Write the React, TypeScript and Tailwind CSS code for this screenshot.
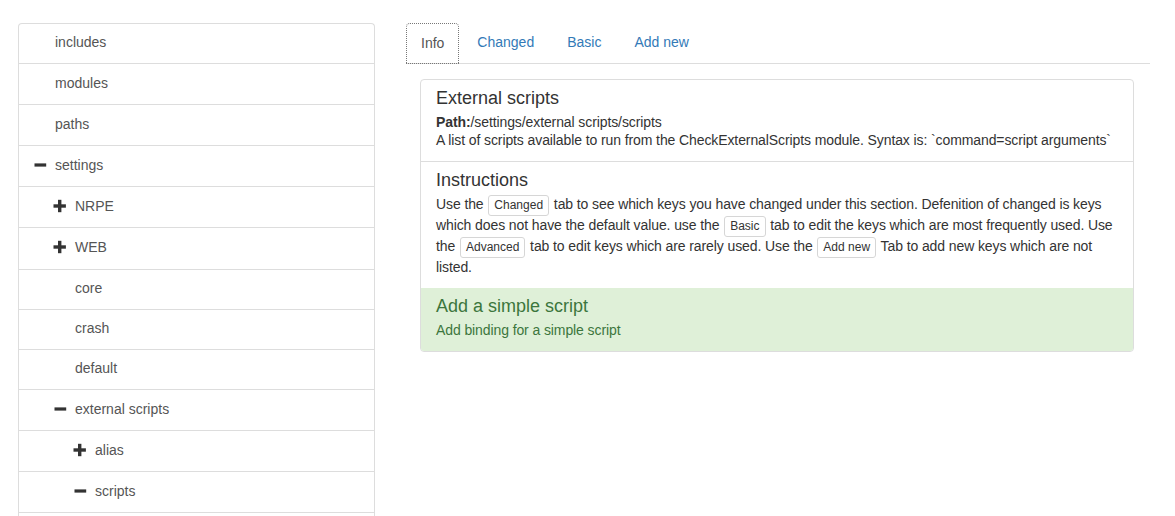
import React from "react";

type Node = {
  label: string;
  level: number;
  icon?: "plus" | "minus";
  h: string;
};

const nodes: Node[] = [
  { label: "includes", level: 0, h: "h-[40px]" },
  { label: "modules", level: 0, h: "h-[41px]" },
  { label: "paths", level: 0, h: "h-[41px]" },
  { label: "settings", level: 0, icon: "minus", h: "h-[41px]" },
  { label: "NRPE", level: 1, icon: "plus", h: "h-[41px]" },
  { label: "WEB", level: 1, icon: "plus", h: "h-[42px]" },
  { label: "core", level: 1, h: "h-[40px]" },
  { label: "crash", level: 1, h: "h-[40px]" },
  { label: "default", level: 1, h: "h-[40px]" },
  { label: "external scripts", level: 1, icon: "minus", h: "h-[41px]" },
  { label: "alias", level: 2, icon: "plus", h: "h-[41px]" },
  { label: "scripts", level: 2, icon: "minus", h: "h-[41px]" },
  { label: "", level: 2, h: "h-[41px]" },
];

const indent = ["pl-[14px]", "pl-[34px]", "pl-[54px]"];

function Glyph({ kind }: { kind?: "plus" | "minus" }) {
  return (
    <span className="w-[22px] h-[14px] flex-shrink-0 flex items-center">
      {kind === "plus" && (
        <svg width="14" height="14" viewBox="0 0 14 14" fill="#333">
          <rect x="0.5" y="5.3" width="12.4" height="3.4" />
          <rect x="5" y="0.8" width="3.4" height="12.4" />
        </svg>
      )}
      {kind === "minus" && (
        <svg width="14" height="14" viewBox="0 0 14 14" fill="#333">
          <rect x="1.5" y="5.4" width="11.7" height="3.2" />
        </svg>
      )}
    </span>
  );
}

function Key({ children }: { children: React.ReactNode }) {
  return (
    <span className="inline-block align-middle mx-[1px] px-[5px] py-[1px] text-[12px] leading-[17px] tracking-normal text-[#333] bg-white border border-[#d6d6d6] rounded-[3px]">
      {children}
    </span>
  );
}

export default function App() {
  return (
    <div
      className="w-[1175px] h-[516px] overflow-hidden bg-white text-[14px] text-[#333] pt-[23px] pl-[18px] flex gap-[31px]"
      style={{ fontFamily: '"Liberation Sans", Arial, sans-serif' }}
    >
      {/* Tree */}
      <div className="w-[357px] flex-shrink-0">
        <div className="border border-b-0 border-[#ddd] rounded-t-[4px]">
          {nodes.map((n, i) => (
            <div
              key={i}
              className={`${n.h} ${indent[n.level]} pb-[3px] flex items-center border-b border-[#ddd] text-[#555] leading-[20px]`}
            >
              <Glyph kind={n.icon} />
              <span>{n.label}</span>
            </div>
          ))}
        </div>
      </div>

      {/* Right side */}
      <div className="w-[744px] flex-shrink-0">
        <div className="flex border-b border-[#ddd] h-[41px]">
          <div className="h-[41px] px-[14px] leading-[39px] border border-dotted border-[#777] rounded-t-[4px] text-[#555] mr-[2px]">
            Info
          </div>
          {["Changed", "Basic", "Add new"].map((t, i) => (
            <div
              key={t}
              className={`h-[40px] pr-[15.5px] ${i === 0 ? "pl-[16px]" : "pl-[15.5px]"} leading-[38px] text-[#337ab7] mr-[2px]`}
            >
              {t}
            </div>
          ))}
        </div>

        <div className="mt-[15px] ml-[14px] w-[714px] border border-[#ddd] rounded-[4px] overflow-hidden tracking-[-0.1px]">
          <div className="px-[15px] pt-[8px] pb-[12px] border-b border-[#ddd]">
            <h4 className="text-[18px] leading-[20px] mb-[5px] text-[#333] tracking-normal">External scripts</h4>
            <p className="leading-[18px]">
              <b>Path:</b>/settings/external scripts/scripts
            </p>
            <p className="leading-[18px]">
              A list of scripts available to run from the CheckExternalScripts module. Syntax is: `command=script arguments`
            </p>
          </div>
          <div className="px-[15px] pt-[8px] pb-[12px]">
            <h4 className="text-[18px] leading-[20px] mb-[5px] text-[#333] tracking-normal">Instructions</h4>
            <p className="leading-[18px]">
              Use the <Key>Changed</Key> tab to see which keys you have changed under this section. Defenition of changed is keys which does not have the default value. use the <Key>Basic</Key> tab to edit the keys which are most frequently used. Use the <Key>Advanced</Key> tab to edit keys which are rarely used. Use the <Key>Add new</Key> Tab to add new keys which are not listed.
            </p>
          </div>
          <div className="px-[15px] pt-[8px] pb-[12px] bg-[#dff0d8] text-[#3c763d]">
            <h4 className="text-[18px] leading-[20px] mb-[5px] tracking-normal">Add a simple script</h4>
            <p className="leading-[18px]">Add binding for a simple script</p>
          </div>
        </div>
      </div>
    </div>
  );
}
